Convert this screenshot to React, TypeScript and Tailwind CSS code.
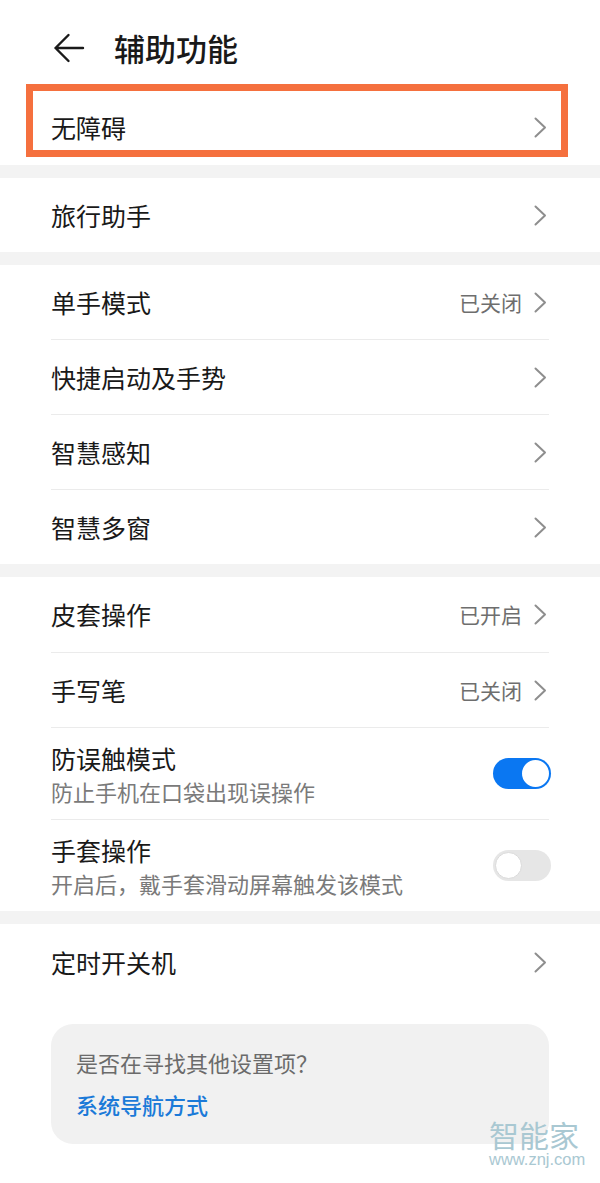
import React from "react";

const Chevron = () => (
  <svg width="13" height="21" viewBox="0 0 13 21" fill="none" className="shrink-0">
    <path d="M1.5 1.5 L11 10.5 L1.5 19.5" stroke="#8e8e8e" strokeWidth="2" strokeLinecap="round" strokeLinejoin="round" />
  </svg>
);

const Gap = () => <div className="h-[13px] bg-[#f3f3f3]" />;

const Divider = () => <div className="mx-[51px] h-px bg-[#ebebeb]" />;

function Row({ label, value, h = "h-[74px]" }: { label: string; value?: string; h?: string }) {
  return (
    <div className={`${h} flex items-center justify-between pl-[51px] pr-[53px]`}>
      <span className="text-[25px] leading-none text-[#191919]">{label}</span>
      <div className="flex items-center gap-[12px]">
        {value && <span className="text-[21px] leading-none text-[#6e6e6e]">{value}</span>}
        <Chevron />
      </div>
    </div>
  );
}

function ToggleRow({ label, sub, on }: { label: string; sub: string; on: boolean }) {
  return (
    <div className="h-[91px] flex items-center justify-between pl-[51px] pr-[49px]">
      <div className="flex flex-col">
        <span className="text-[25px] leading-none text-[#191919]">{label}</span>
        <span className="mt-[9px] text-[22px] leading-none text-[#7a7a7a]">{sub}</span>
      </div>
      {on ? (
        <div className="w-[58px] h-[31px] rounded-full bg-[#0a77f2] flex items-center justify-end pr-[2px]">
          <div className="w-[27px] h-[27px] rounded-full bg-white" />
        </div>
      ) : (
        <div className="w-[58px] h-[31px] rounded-full bg-[#e6e6e6] flex items-center pl-[2px]">
          <div className="w-[27px] h-[27px] rounded-full bg-white border border-[#dadada]" />
        </div>
      )}
    </div>
  );
}

export default function App() {
  return (
    <div className="relative w-[600px] h-[1183px] overflow-hidden bg-white font-['Noto_Sans_CJK_SC','Noto_Sans',sans-serif]">
      {/* Header */}
      <div className="h-[90px] flex items-center pl-[53px] pt-[5px]">
        <svg width="32" height="30" viewBox="0 0 32 30" fill="none">
          <path d="M30 15 H2.5 M15.5 2 L2.5 15 L15.5 28" stroke="#1a1a1a" strokeWidth="2.4" strokeLinecap="round" strokeLinejoin="round" />
        </svg>
        <span className="ml-[29px] text-[31px] leading-none font-medium text-[#191919]">辅助功能</span>
      </div>

      {/* 无障碍 with highlight */}
      <div className="relative">
        <Row label="无障碍" h="h-[75px]" />
        <div className="absolute left-[26px] top-[-6px] w-[542px] h-[73px] border-[7px] border-[#f5703e]" />
      </div>
      <Gap />
      <Row label="旅行助手" />
      <Gap />
      <Row label="单手模式" value="已关闭" />
      <Divider />
      <Row label="快捷启动及手势" />
      <Divider />
      <Row label="智慧感知" />
      <Divider />
      <Row label="智慧多窗" />
      <Gap />
      <Row label="皮套操作" value="已开启" h="h-[75px]" />
      <Divider />
      <Row label="手写笔" value="已关闭" />
      <Divider />
      <ToggleRow label="防误触模式" sub="防止手机在口袋出现误操作" on />
      <Divider />
      <ToggleRow label="手套操作" sub="开启后，戴手套滑动屏幕触发该模式" on={false} />
      <Gap />
      <Row label="定时开关机" h="h-[76px]" />

      {/* Card */}
      <div className="mx-[51px] mt-[24px] h-[120px] rounded-[22px] bg-[#f1f1f1] pl-[25px] pt-[27px]">
        <div className="text-[22px] leading-none text-[#6b6b6b]">是否在寻找其他设置项？</div>
        <div className="mt-[20px] text-[22px] leading-none font-medium text-[#1b7ad8]">系统导航方式</div>
      </div>

      {/* Watermark */}
      <div className="absolute left-[489px] top-[1120px] flex flex-col items-start">
        <span className="block h-[28px] text-[30px] leading-[28px] text-[#a9c8d2]">智能家</span>
        <span className="block mt-[3px] h-[17px] text-[16.5px] leading-[17px] text-[#a9c8d2] font-['Liberation_Sans',sans-serif]">www.znj.com</span>
      </div>
    </div>
  );
}
